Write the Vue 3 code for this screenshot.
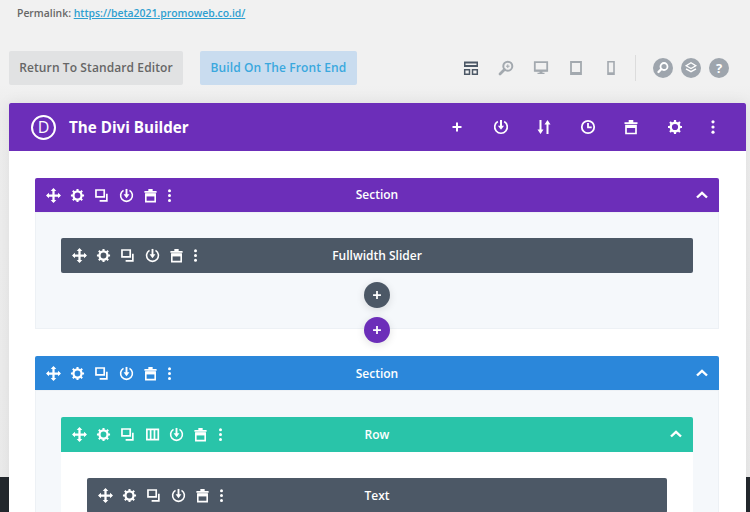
<script setup>
const sectionTools = ['move', 'gear', 'copy', 'power', 'trash', 'dots']
const rowTools = ['move', 'gear', 'copy', 'cols', 'power', 'trash', 'dots']
const headTools = ['plus', 'power', 'sort', 'clock', 'trash', 'gear', 'dots']
const viewTools = ['layout', 'zoom', 'desktop', 'tablet', 'phone']
</script>

<template>
  <div class="page">
    <svg class="sprite" width="0" height="0" aria-hidden="true">
      <defs>
        <symbol id="move" viewBox="0 0 16 16"><path d="M8 1.500v13M1.500 8h13" fill="none" stroke="currentColor" stroke-width="2.400"/><path d="M8 0l3 3.200H5zM8 16l-3-3.200h6zM0 8l3.200-3v6zM16 8l-3.200 3V5z" fill="currentColor"/></symbol>
        <symbol id="gear" viewBox="0 0 16 16"><circle cx="8" cy="8" r="4.300" fill="none" stroke="currentColor" stroke-width="2.400"/><path d="M8 1v3M8 12v3M1 8h3M12 8h3M3 3l2.200 2.200M10.800 10.800L13 13M13 3l-2.200 2.200M5.200 10.800L3 13" stroke="currentColor" stroke-width="2.200"/></symbol>
        <symbol id="copy" viewBox="0 0 16 16"><path d="M2.100 2.100h8.800v7.300H2.100zM13.700 6.200v7.500H6" fill="none" stroke="currentColor" stroke-width="1.800"/></symbol>
        <symbol id="power" viewBox="0 0 16 16"><path d="M4.800 2.500a6.300 6.300 0 1 0 6.400 0" fill="none" stroke="currentColor" stroke-width="1.700"/><path d="M8 1v6.500" stroke="currentColor" stroke-width="2"/><path d="M4.900 6.700h6.200L8 10.800z" fill="currentColor"/></symbol>
        <symbol id="trash" viewBox="0 0 16 16"><path d="M1.500 3.200h13V5h-13zM5.700 1h4.600v2.500H5.700z" fill="currentColor"/><path d="M3 6.500h10V14.500H3z" fill="none" stroke="currentColor" stroke-width="1.700"/><path d="M3 6h10v3H3z" fill="currentColor"/></symbol>
        <symbol id="dots" viewBox="0 0 16 16"><circle cx="8" cy="2.800" r="1.600" fill="currentColor"/><circle cx="8" cy="8" r="1.600" fill="currentColor"/><circle cx="8" cy="13.200" r="1.600" fill="currentColor"/></symbol>
        <symbol id="cols" viewBox="0 0 16 16"><path d="M2 2.500h12.200v11H2zM6 2.500v11M10.100 2.500v11" fill="none" stroke="currentColor" stroke-width="1.800"/></symbol>
        <symbol id="plus" viewBox="0 0 16 16"><path d="M8 3.500v9M3.500 8h9" stroke="currentColor" stroke-width="2"/></symbol>
        <symbol id="sort" viewBox="0 0 16 16"><path d="M4.500 1v11M11.500 4v11" stroke="currentColor" stroke-width="2"/><path d="M1.500 10.500h6L4.500 15zM8.500 5.500h6L11.500 1z" fill="currentColor"/></symbol>
        <symbol id="clock" viewBox="0 0 16 16"><circle cx="8" cy="8" r="6.200" fill="none" stroke="currentColor" stroke-width="1.800"/><path d="M8 4v4.300h3.700" fill="none" stroke="currentColor" stroke-width="1.800"/></symbol>
        <symbol id="layout" viewBox="0 0 16 16"><path d="M1 1.500h14v5.500H1z" fill="currentColor"/><path d="M2.500 3.500h11v1.500h-11z" fill="#f1f1f1"/><path d="M1.700 9.700h4.800v4.600H1.700zM9.500 9.700h4.800v4.600H9.500z" fill="none" stroke="currentColor" stroke-width="1.500"/></symbol>
        <symbol id="zoom" viewBox="0 0 16 16"><circle cx="9.800" cy="6.200" r="4.500" fill="none" stroke="currentColor" stroke-width="2"/><path d="M6.500 9.500L2 14" stroke="currentColor" stroke-width="2.800" stroke-linecap="round"/><path d="M9.800 4.400v3.600M8 6.200h3.600" stroke="currentColor" stroke-width="1"/></symbol>
        <symbol id="desktop" viewBox="0 0 16 16"><path d="M1.800 2.200h12.400v8.600H1.800z" fill="none" stroke="currentColor" stroke-width="1.800"/><path d="M2 9.500h12v1.800H2zM6.500 11h3v2h-3zM4.500 12.800h7v1.200h-7z" fill="currentColor"/></symbol>
        <symbol id="tablet" viewBox="0 0 16 16"><path d="M3 2h10v12H3z" fill="none" stroke="currentColor" stroke-width="1.800"/><path d="M3 12h10v2H3z" fill="currentColor"/></symbol>
        <symbol id="phone" viewBox="0 0 16 16"><path d="M5 1.800h6v12.400H5z" fill="none" stroke="currentColor" stroke-width="1.600"/><path d="M5 12.300h6v2H5z" fill="currentColor"/></symbol>
        <symbol id="search" viewBox="0 0 20 20"><circle cx="11" cy="8.500" r="3.500" fill="none" stroke="currentColor" stroke-width="1.800"/><path d="M8.400 11L5.500 14" stroke="currentColor" stroke-width="2.400" stroke-linecap="round"/></symbol>
        <symbol id="layers" viewBox="0 0 20 20"><path d="M10 4.800l4.800 3L10 10.600 5.200 7.800z" fill="none" stroke="currentColor" stroke-width="1.300"/><path d="M5 10.800l5 2.900 5-2.900" fill="none" stroke="currentColor" stroke-width="1.400"/></symbol>
        <symbol id="chevron" viewBox="0 0 16 16"><path d="M3 10.500L8 5.800l5 4.700" fill="none" stroke="currentColor" stroke-width="2.400"/></symbol>
      </defs>
    </svg>

    <div class="footer-strip"></div>

    <p class="permalink">Permalink: <a>https://beta2021.promoweb.co.id/</a></p>

    <div class="actions">
      <span class="btn btn-grey">Return To Standard Editor</span>
      <span class="btn btn-blue">Build On The Front End</span>
      <div class="views">
        <svg v-for="v in viewTools" :key="v" class="view-icon" :class="'v-' + v"><use :href="'#' + v" /></svg>
      </div>
      <span class="divider"></span>
      <div class="rounds">
        <span class="round"><svg class="round-icon"><use href="#search" /></svg></span>
        <span class="round"><svg class="round-icon"><use href="#layers" /></svg></span>
        <span class="round round-q">?</span>
      </div>
    </div>

    <main class="builder">
      <header class="builder-head">
        <span class="logo">D</span>
        <h1>The Divi Builder</h1>
        <div class="head-tools">
          <svg v-for="t in headTools" :key="t" class="head-icon"><use :href="'#' + t" /></svg>
        </div>
      </header>

      <div class="builder-body">
        <section class="section">
          <div class="bar purple">
            <div class="tools"><svg v-for="t in sectionTools" :key="t" class="tool" :class="'t-' + t"><use :href="'#' + t" /></svg></div>
            <span class="bar-title">Section</span>
            <svg class="chev"><use href="#chevron" /></svg>
          </div>
          <div class="section-body first">
            <div class="bar slate">
              <div class="tools"><svg v-for="t in sectionTools" :key="t" class="tool" :class="'t-' + t"><use :href="'#' + t" /></svg></div>
              <span class="bar-title">Fullwidth Slider</span>
            </div>
            <span class="add add-slate"><svg class="add-icon"><use href="#plus" /></svg></span>
            <span class="add add-purple"><svg class="add-icon"><use href="#plus" /></svg></span>
          </div>
        </section>

        <section class="section second">
          <div class="bar blue">
            <div class="tools"><svg v-for="t in sectionTools" :key="t" class="tool" :class="'t-' + t"><use :href="'#' + t" /></svg></div>
            <span class="bar-title">Section</span>
            <svg class="chev"><use href="#chevron" /></svg>
          </div>
          <div class="section-body">
            <div class="bar green">
              <div class="tools"><svg v-for="t in rowTools" :key="t" class="tool" :class="'t-' + t"><use :href="'#' + t" /></svg></div>
              <span class="bar-title">Row</span>
              <svg class="chev"><use href="#chevron" /></svg>
            </div>
            <div class="row-body">
              <div class="bar slate">
                <div class="tools"><svg v-for="t in sectionTools" :key="t" class="tool" :class="'t-' + t"><use :href="'#' + t" /></svg></div>
                <span class="bar-title">Text</span>
              </div>
            </div>
          </div>
        </section>
      </div>
    </main>
  </div>
</template>

<style>
html, body { margin: 0; overflow: hidden; }
</style>

<style scoped>
.page {
  position: relative;
  width: 750px;
  height: 512px;
  overflow: hidden;
  background: linear-gradient(#f1f1f1 0, #f1f1f1 85px, #eeeeee 103px, #ebebeb 512px);
  font-family: "Open Sans", "Noto Sans", sans-serif;
}
.sprite { position: absolute; }
.footer-strip {
  position: absolute;
  left: 0;
  right: 0;
  bottom: 0;
  height: 35px;
  background: #23282d;
}
.permalink {
  margin: 0;
  height: 28px;
  padding: 5px 0 0 17px;
  box-sizing: border-box;
  font-size: 10.400px;
  line-height: 16px;
  font-weight: 600;
  color: #666;
}
.permalink a { color: #2e9fd0; text-decoration: underline; }
.actions {
  display: flex;
  align-items: center;
  height: 34px;
  margin-top: 23px;
  padding-left: 9px;
}
.btn {
  display: flex;
  align-items: center;
  justify-content: center;
  height: 34px;
  padding-bottom: 1px;
  box-sizing: border-box;
  border-radius: 2px;
  font-size: 12px;
  font-weight: 600;
  letter-spacing: 0.100px;
}
.btn-grey { width: 174px; background: #e1e2e3; color: #666; }
.btn-blue { width: 157px; margin-left: 17px; background: #c9dcef; color: #3aa8de; }
.views {
  display: flex;
  gap: 19px;
  margin-left: 106px;
  color: #a3a9af;
}
.view-icon { width: 16px; height: 16px; }
.v-layout { color: #4c5866; }
.divider { width: 1px; height: 26px; margin-left: 16px; background: #dcdcdc; }
.rounds { display: flex; gap: 8px; margin-left: 17px; }
.round {
  display: flex;
  align-items: center;
  justify-content: center;
  width: 20px;
  height: 20px;
  border-radius: 50%;
  background: #9ea5ad;
  color: #fff;
}
.round-icon { width: 20px; height: 20px; }
.round-q { font-size: 13px; font-weight: 700; line-height: 20px; }
.builder {
  position: relative;
  width: 737px;
  margin: 18px 0 0 9px;
  background: #fff;
  box-shadow: 0 0 14px rgba(0, 0, 0, 0.07);
  height: 409px;
  overflow: hidden;
}
.builder-head {
  display: flex;
  align-items: center;
  height: 48px;
  padding-left: 22px;
  background: #6c2eb9;
  color: #fff;
  border-radius: 2px 2px 0 0;
}
.logo {
  display: flex;
  align-items: center;
  justify-content: center;
  width: 21px;
  height: 21px;
  border: 2px solid #fff;
  border-radius: 50%;
  font-size: 16px;
  font-weight: 400;
  line-height: 1;
}
h1 {
  margin: 0 0 0 13px;
  font-size: 15.200px;
  font-weight: 700;
  line-height: 22px;
}
.head-tools {
  display: flex;
  gap: 27.500px;
  margin-left: auto;
  margin-right: 25px;
}
.head-icon { width: 16px; height: 16px; }
.head-icon:last-child { margin-left: -5px; }
.builder-body { padding: 27px 27px 0 26px; }
.section.second { margin-top: 27px; }
.bar {
  position: relative;
  display: flex;
  align-items: center;
  justify-content: center;
  height: 34px;
  color: #fff;
  border-radius: 2px 2px 0 0;
}
.purple { background: #6c2eb9; }
.blue { background: #2b87da; }
.green { background: #29c4a9; height: 35px; }
.slate { background: #4c5866; border-radius: 2px; height: 35px; }
.tools {
  position: absolute;
  left: 11px;
  top: 0;
  bottom: 0;
  display: flex;
  align-items: center;
  gap: 9.200px;
}
.tool { width: 15px; height: 15px; }
.t-dots { margin-left: -4.500px; }
.bar-title { font-size: 12px; font-weight: 600; line-height: 18px; }
.blue .bar-title { padding-top: 1px; }
.chev {
  position: absolute;
  right: 9px;
  top: 9px;
  width: 16px;
  height: 16px;
}
.section-body {
  position: relative;
  padding: 27px 26px 0;
  background: #f5f8fb;
  box-shadow: inset 0 0 0 1px #edf1f5;
}
.section-body.first {
  display: flex;
  flex-direction: column;
  padding-top: 26px;
  height: 117px;
  box-sizing: border-box;
}
.add {
  display: flex;
  align-items: center;
  justify-content: center;
  width: 26px;
  height: 26px;
  border-radius: 50%;
  color: #fff;
  box-shadow: 0 2px 8px rgba(0, 0, 0, 0.12);
}
.add-icon { width: 14px; height: 14px; }
.add-slate { align-self: center; margin-top: 9px; background: #4c5866; }
.add-purple {
  position: absolute;
  left: 50%;
  bottom: -14px;
  margin-left: -13px;
  background: #6c2eb9;
}
.row-body { padding: 26px 26px 0; background: #fff; }
</style>
